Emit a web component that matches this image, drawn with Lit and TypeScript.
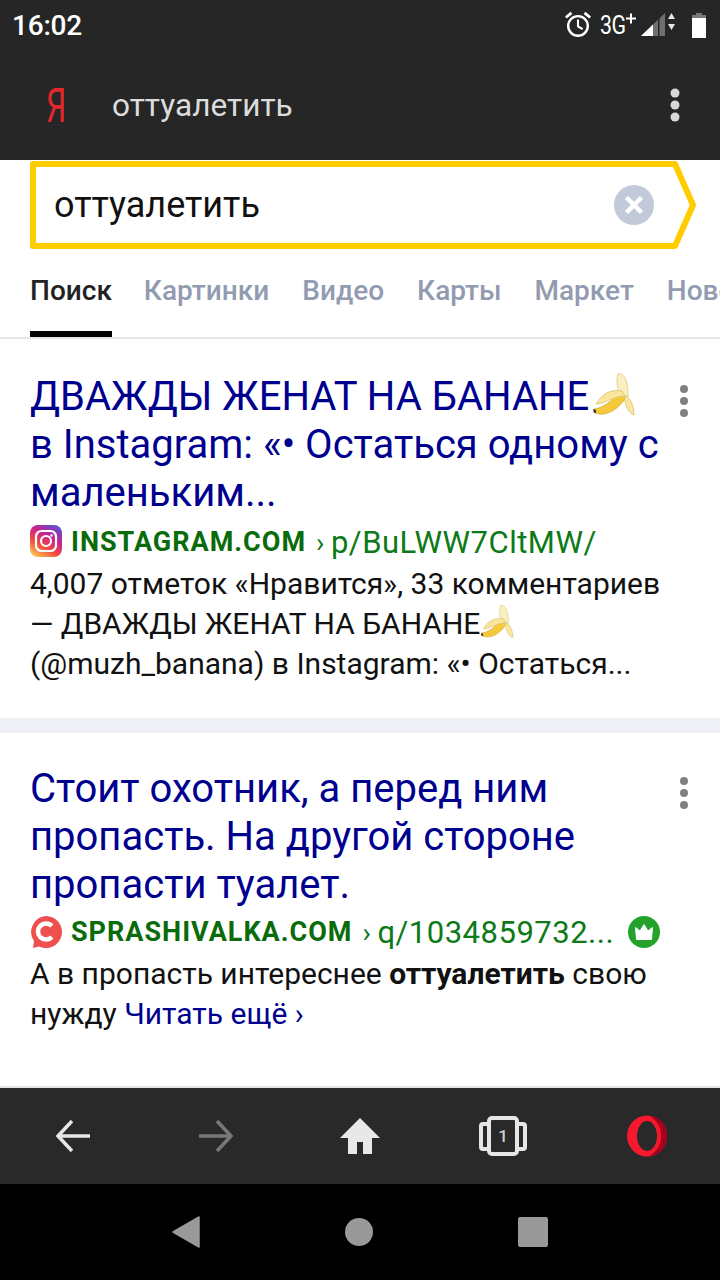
import { LitElement, html, css } from "lit";
import { customElement } from "lit/decorators.js";

const banana = (size: number) => html`<svg class="banana" width=${size} height=${size} viewBox="0 0 46 46">
  <path d="M2 40C9 45 24 42 35 24L25 21C20 30 10 36 2 37Z" fill="#f6c93a" stroke="#c99f2a" stroke-width=".6"/>
  <path d="M1 37l3 1 0 3-2 0z" fill="#4a3a1a"/>
  <path d="M26 2C32 0 37 10 36 25L28 24C25 16 24 8 26 2Z" fill="#faf0bf" stroke="#dcc98a" stroke-width=".8"/>
  <path d="M4 32C10 22 18 17 30 19L33 24C22 24 12 32 4 32Z" fill="#f8e69a" stroke="#dcc070" stroke-width=".8"/>
  <path d="M33 24C38 24 42 34 42 43C36 41 32 32 33 24Z" fill="#f9e7a0" stroke="#d9bf70" stroke-width=".8"/>
</svg>`;

const dots = html`<svg class="dots" width="10" height="32" viewBox="0 0 10 32"><circle cx="5" cy="4" r="4"/><circle cx="5" cy="16" r="4"/><circle cx="5" cy="28" r="4"/></svg>`;

@customElement("app-root")
export class AppRoot extends LitElement {
  static styles = css`
    :host { display: block; width: 720px; height: 1280px; overflow: hidden; font-family: Roboto, "Noto Sans", sans-serif; background: #fff; }
    .page { display: flex; flex-direction: column; height: 1280px; }
    .status { height: 50px; flex: none; background: #262626; display: flex; align-items: center; padding: 0 14px 0 12px; color: #fff; }
    .time { font-size: 28px; font-weight: 500; flex: 1; letter-spacing: -0.2px; }
    .status-icons { display: flex; align-items: center; }
    .alarm { margin-right: 8px; }
    .net { font-size: 26px; width: 26px; display: inline-block; transform: scaleX(.82); transform-origin: left; letter-spacing: -0.5px; }
    .batt { margin-left: 16px; }
    .toolbar { height: 110px; flex: none; background: #262626; display: flex; align-items: center; padding: 0 39px 0 46px; box-sizing: border-box; }
    .ya { font-size: 49px; color: #e3262b; width: 66px; line-height: 1; transform: scaleX(.65); transform-origin: left; }
    .query { flex: 1; font-size: 31.6px; color: #dcdcdc; }
    .dots-light { fill: #d8d8d8; }
    .search { position: relative; margin: 1px 0 0 30px; width: 666px; height: 88px; flex: none; display: flex; align-items: center; padding-left: 24px; box-sizing: border-box; font-size: 36px; color: #111; }
    .search-frame { position: absolute; left: 0; top: 0; }
    .search span { position: relative; flex: 1; }
    .clear { position: relative; margin-right: 42px; }
    .tabs { height: 90px; flex: none; display: flex; gap: 33px; padding-left: 30px; box-sizing: border-box; border-bottom: 2px solid #e6e6e6; overflow: hidden; white-space: nowrap; font-size: 28px; font-weight: 500; color: #929bb0; }
    .tab { height: 88px; line-height: 84px; flex: none; box-sizing: border-box; }
    .tab.on { color: #222; border-bottom: 6px solid #000; margin-right: -1px; }
    .results { flex: 1; min-height: 0; display: flex; flex-direction: column; }
    .card { padding: 33px 0 0 30px; position: relative; box-sizing: border-box; }
    .card.one { height: 394px; border-bottom: 15px solid #eef0f6; }
    .card.two { height: 355px; padding-top: 32px; border-bottom: 2px solid #e4e4e4; }
    .title { font-size: 40px; line-height: 48px; color: #00008f; white-space: nowrap; }
    .title .banana { vertical-align: -8px; margin-left: 3px; }
    .url { display: flex; align-items: center; height: 48px; white-space: nowrap; font-size: 31px; color: #0b7a17; }
    .url svg.fav { margin-right: 9px; flex: none; }
    .domain { font-weight: 700; font-size: 27px; letter-spacing: 1px; color: #0a6b0a; }
    .sep { margin: 0 6.5px 0 10px; font-size: 28px; }
    .path { letter-spacing: 0.5px; }
    .crown { margin-left: 14px; }
    .desc { font-size: 30px; line-height: 40px; color: #111; white-space: nowrap; }
    .card.one .desc { margin-top: -1px; }
    .card.one .url span { padding-top: 2px; }
    .card.two .url { margin-top: 1px; height: 44px; }
    .desc .banana { vertical-align: -6px; }
    .desc b { font-weight: 700; }
    .desc a { color: #00008f; text-decoration: none; }
    .more { position: absolute; right: 31px; top: 46px; fill: #808080; }
    .card.two .more { top: 44px; }
    .bottombar { height: 96px; flex: none; background: #292929; display: grid; grid-template-columns: repeat(5, 143.5px); padding-left: 1px; align-items: center; justify-items: center; }
    .sysnav { height: 96px; flex: none; background: #000; display: flex; justify-content: center; align-items: center; gap: 145px; }
  `;

  render() {
    return html`<div class="page">
      <div class="status">
        <div class="time">16:02</div>
        <div class="status-icons">
          <svg class="alarm" width="28" height="30" viewBox="0 0 30 30" fill="none" stroke="#fff" stroke-width="2.600">
            <circle cx="15" cy="16" r="10.500"/><path d="M15 9v7.500l5 3" stroke-width="2.200"/>
            <path d="M2 7l6-5M28 7l-6-5" stroke-width="3"/>
          </svg>
          <span class="net">3G</span>
          <svg width="50" height="36" viewBox="0 0 50 36">
            <path d="M0 11.500h10M5 6.500v10" stroke="#fff" stroke-width="2"/>
            <path d="M15 29L39 6V29Z" fill="#6f6f6f"/><path d="M15 29L27 17.500V29Z" fill="#fff"/>
            <path d="M32 29V12l1.500-1.500V29Z" fill="#262626"/>
            <path d="M45.500 6l-3.500 6h7zM45.500 23l-3.500-6h7z" fill="#e8e8e8"/>
          </svg>
          <svg class="batt" width="14" height="25" viewBox="0 0 14 25">
            <path d="M4 0h6v2H4z" fill="#777"/><path d="M0 2h14v3H0z" fill="#777"/><path d="M0 5h14v20H0z" fill="#fff"/>
          </svg>
        </div>
      </div>
      <div class="toolbar">
        <div class="ya">Я</div>
        <div class="query">оттуалетить</div>
        <svg class="dots-light" width="12" height="34" viewBox="0 0 12 34"><circle cx="6" cy="5" r="4.500"/><circle cx="6" cy="17" r="4.500"/><circle cx="6" cy="29" r="4.500"/></svg>
      </div>
      <div class="search">
        <svg class="search-frame" width="667" height="88" viewBox="0 0 667 88"><path d="M3 3H645L663 44L645 85H3Z" fill="#fff" stroke="#fc0" stroke-width="6" stroke-linejoin="round"/></svg>
        <span>оттуалетить</span>
        <svg class="clear" width="40" height="40" viewBox="0 0 40 40"><circle cx="20" cy="20" r="20" fill="#c2c9d9"/><path d="M12.500 12.500l15 15M27.500 12.500l-15 15" stroke="#fff" stroke-width="4.500"/></svg>
      </div>
      <div class="tabs">
        <div class="tab on">Поиск</div><div class="tab">Картинки</div><div class="tab">Видео</div><div class="tab">Карты</div><div class="tab">Маркет</div><div class="tab">Новости</div>
      </div>
      <div class="results">
        <div class="card one">
          <div class="title">ДВАЖДЫ ЖЕНАТ НА БАНАНЕ${banana(46)}<br>в Instagram: «• Остаться одному с<br>маленьким...</div>
          <div class="url">
            <svg class="fav" width="32" height="32" viewBox="0 0 32 32">
              <defs><linearGradient id="ig" x1="0.200" y1="1" x2="0.800" y2="0">
                <stop offset="0" stop-color="#fdc04f"/><stop offset=".35" stop-color="#f0483e"/><stop offset=".65" stop-color="#c9228f"/><stop offset="1" stop-color="#5a50cf"/>
              </linearGradient></defs>
              <rect width="32" height="32" rx="8" fill="url(#ig)"/>
              <rect x="6" y="6" width="20" height="20" rx="5.500" fill="none" stroke="#fff" stroke-width="2.200"/>
              <circle cx="16" cy="16" r="5" fill="none" stroke="#fff" stroke-width="2.200"/>
              <circle cx="21.500" cy="10.500" r="1.300" fill="#fff"/>
            </svg>
            <span class="domain">INSTAGRAM.COM</span><span class="sep">›</span><span class="path">p/BuLWW7CltMW/</span>
          </div>
          <div class="desc">4,007 отметок «Нравится», 33 комментариев<br>— ДВАЖДЫ ЖЕНАТ НА БАНАНЕ${banana(36)}<br>(@muzh_banana) в Instagram: «• Остаться...</div>
          <div class="more">${dots}</div>
        </div>
        <div class="card two">
          <div class="title">Стоит охотник, а перед ним<br>пропасть. На другой стороне<br>пропасти туалет.</div>
          <div class="url">
            <svg class="fav" width="32" height="32" viewBox="0 0 32 32">
              <path d="M16 0a16 16 0 1 1-7 30.400L3 32l1-7A16 16 0 0 1 16 0Z" fill="#ee5050"/>
              <circle cx="16" cy="15.500" r="8" fill="none" stroke="#fff" stroke-width="4.500" stroke-dasharray="38 12" stroke-dashoffset="-6"/>
            </svg>
            <span class="domain">SPRASHIVALKA.COM</span><span class="sep">›</span><span class="path">q/1034859732...</span>
            <svg class="crown" width="32" height="32" viewBox="0 0 32 32"><circle cx="16" cy="16" r="16" fill="#25a22a"/><path d="M7.500 11.500l4.500 3.500L16 8.500l4 6.500 4.500-3.500-1 12h-15Z" fill="#fff" stroke="#fff" stroke-linejoin="round"/></svg>
          </div>
          <div class="desc">А в пропасть интереснее <b>оттуалетить</b> свою<br>нужду <a>Читать ещё ›</a></div>
          <div class="more">${dots}</div>
        </div>
      </div>
      <div class="bottombar">
        <svg width="36" height="34" viewBox="0 0 36 34" fill="none" stroke="#e6e6e6" stroke-width="3.500"><path d="M35 17H3M17 2L3 17 17 32" /></svg>
        <svg width="36" height="34" viewBox="0 0 36 34" fill="none" stroke="#787878" stroke-width="3.500"><path d="M1 17H33M19 2L33 17 19 32"/></svg>
        <svg width="40" height="36" viewBox="0 0 40 36"><path d="M20 0L40 20H32V36H23V24H17V36H8V20H0Z" fill="#e8e8e8"/></svg>
        <svg width="48" height="42" viewBox="0 0 48 42" fill="none" stroke="#e6e6e6" stroke-width="4">
          <rect x="10" y="3" width="28" height="36" rx="3"/><path d="M8 9H4a2 2 0 0 0-2 2V32a2 2 0 0 0 2 2H8M40 9h4a2 2 0 0 1 2 2V32a2 2 0 0 1-2 2H40"/>
          <text x="24" y="27" text-anchor="middle" font-size="17" font-weight="500" font-family="Roboto" fill="#cfcfcf" stroke="none">1</text>
        </svg>
        <svg width="40" height="42" viewBox="0 0 40 42">
          <ellipse cx="20" cy="21" rx="20" ry="20.500" fill="#f5182f"/>
          <path d="M22 .6C33 2 40 10 40 21s-7 19-18 20.400C31 36 34 29 34 21S31 6 22 .6Z" fill="#a8001c"/>
          <ellipse cx="20" cy="21" rx="10" ry="15" fill="#292929"/>
        </svg>
      </div>
      <div class="sysnav">
        <svg width="28" height="32" viewBox="0 0 28 32"><path d="M27 1V31L1 16Z" fill="#999" stroke="#999" stroke-width="1.500" stroke-linejoin="round"/></svg>
        <svg width="28" height="28" viewBox="0 0 28 28"><circle cx="14" cy="14" r="14" fill="#999"/></svg>
        <svg width="30" height="30" viewBox="0 0 30 30"><rect width="30" height="30" rx="2" fill="#999"/></svg>
      </div>
    </div>`;
  }
}
